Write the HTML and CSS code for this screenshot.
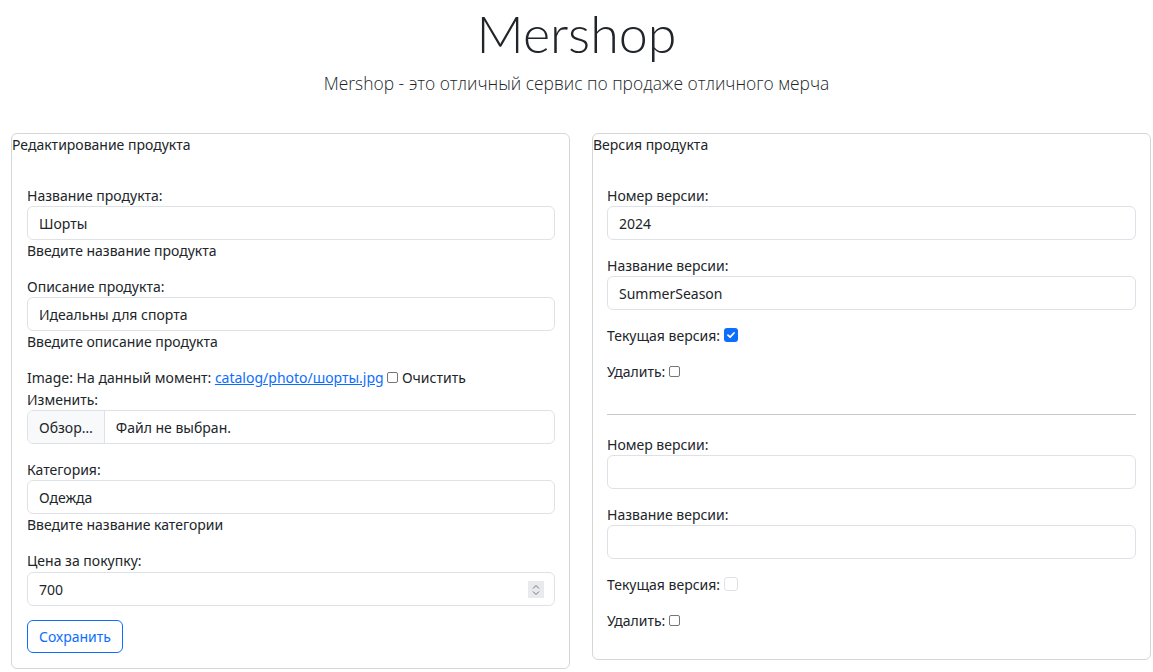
FILE: index.html
```html
<!DOCTYPE html>
<html lang="ru">
<head>
<meta charset="utf-8">
<title>Mershop</title>
<link rel="stylesheet" href="styles.css">
</head>
<body>
<header class="hero">
  <h1 class="hero-title">Mershop</h1>
  <p class="hero-lead">Mershop - это отличный сервис по продаже отличного мерча</p>
</header>
<main class="panels">
  <section class="card card-product">
    <div class="card-title">Редактирование продукта</div>
    <div class="card-body">
      <div class="group">
        <label class="label">Название продукта:</label>
        <div class="input">Шорты</div>
        <div class="help">Введите название продукта</div>
      </div>
      <div class="group">
        <label class="label">Описание продукта:</label>
        <div class="input">Идеальны для спорта</div>
        <div class="help">Введите описание продукта</div>
      </div>
      <div class="group">
        <div class="line">Image: На данный момент: <a class="link" href="#">catalog/photo/шорты.jpg</a> <span class="cb cb-native"></span> Очистить</div>
        <div class="line line-change">Изменить:</div>
        <div class="file">
          <span class="file-btn">Обзор…</span>
          <span class="file-name">Файл не выбран.</span>
        </div>
      </div>
      <div class="group">
        <label class="label">Категория:</label>
        <div class="input">Одежда</div>
        <div class="help">Введите название категории</div>
      </div>
      <div class="group group-price">
        <label class="label">Цена за покупку:</label>
        <div class="input input-number">700
          <span class="spin">
            <svg width="8" height="12" viewBox="0 0 8 12"><path d="M1 4.5 L4 1.5 L7 4.5" fill="none" stroke="#6c757d" stroke-width="1"/><path d="M1 7.5 L4 10.5 L7 7.5" fill="none" stroke="#6c757d" stroke-width="1"/></svg>
          </span>
        </div>
      </div>
      <button class="btn" type="button">Сохранить</button>
    </div>
  </section>

  <section class="card card-version">
    <div class="card-title">Версия продукта</div>
    <div class="card-body">
      <div class="group">
        <label class="label">Номер версии:</label>
        <div class="input">2024</div>
      </div>
      <div class="group">
        <label class="label">Название версии:</label>
        <div class="input">SummerSeason</div>
      </div>
      <div class="group check-row">Текущая версия: <span class="cb cb-checked"><svg width="10" height="10" viewBox="0 0 10 10"><path d="M2 5.2 L4.1 7.2 L8 3" fill="none" stroke="#fff" stroke-width="1.8" stroke-linecap="round" stroke-linejoin="round"/></svg></span></div>
      <div class="group check-row">Удалить: <span class="cb cb-native"></span></div>
      <hr class="divider">
      <div class="group">
        <label class="label">Номер версии:</label>
        <div class="input"></div>
      </div>
      <div class="group">
        <label class="label">Название версии:</label>
        <div class="input"></div>
      </div>
      <div class="group check-row">Текущая версия: <span class="cb cb-empty"></span></div>
      <div class="group check-row last">Удалить: <span class="cb cb-native"></span></div>
    </div>
  </section>
</main>
</body>
</html>
```

FILE: styles.css
```css
* { box-sizing: border-box; }

body {
  margin: 0;
  font-family: "Noto Sans", "Open Sans", sans-serif;
  font-size: 14px;
  line-height: 21px;
  color: #212529;
  background: #fff;
}

.hero {
  text-align: center;
  padding-top: 2px;
}

.hero-title {
  margin: 0;
  font-family: "Lato", "Open Sans", sans-serif;
  font-weight: 300;
  font-size: 52px;
  line-height: 62px;
  color: #212529;
}

.hero-lead {
  margin: 5px 0 0;
  font-family: "Open Sans", "Noto Sans", sans-serif;
  font-weight: 300;
  font-size: 17.4px;
  line-height: 28px;
}

.panels {
  display: flex;
  align-items: flex-start;
  gap: 22px;
  padding: 0 2px 0 11px;
  margin-top: 36px;
}

.card {
  flex: 1 1 0;
  border: 1px solid #d5d6d7;
  border-radius: 6px;
}

.card-title {
  padding: 0;
}

.card-body {
  padding: 30px 14px 15px 15px;
}

.card-version .card-body {
  padding: 30px 14px 14px 14px;
}

.group {
  margin-bottom: 15px;
}

.group.group-price {
  margin-bottom: 14px;
}

.group.last {
  margin-bottom: 14px;
}

.label, .line, .help {
  display: block;
}

.line-change {
  margin-top: 1px;
}

.input {
  position: relative;
  height: 34px;
  border: 1px solid #dee2e6;
  border-radius: 6px;
  padding: 0 11px;
  display: flex;
  align-items: center;
}

.input-number {
  margin-top: 1px;
}

.spin {
  position: absolute;
  right: 10px;
  top: 8px;
  width: 16px;
  height: 17px;
  background: #e9eaed;
  display: flex;
  align-items: center;
  justify-content: center;
}

.link {
  color: #0d6efd;
  text-decoration: underline;
}

.file {
  display: flex;
  height: 34px;
  border: 1px solid #dee2e6;
  border-radius: 6px;
  overflow: hidden;
}

.file-btn {
  display: flex;
  align-items: center;
  padding: 0 11px;
  background: #f8f9fa;
  border-right: 1px solid #dee2e6;
}

.file-name {
  display: flex;
  align-items: center;
  padding: 0 11px;
}

.btn {
  display: block;
  height: 33px;
  padding: 0 11px;
  font: inherit;
  color: #0d6efd;
  background: #fff;
  border: 1px solid #0d6efd;
  border-radius: 6px;
}

.cb {
  display: inline-block;
  vertical-align: middle;
  position: relative;
  top: -2px;
}

.cb-native {
  width: 11px;
  height: 11px;
  border: 1px solid #767676;
  border-radius: 2px;
  background: #fff;
}

.cb-checked {
  width: 14px;
  height: 14px;
  border-radius: 3px;
  background: #0d6efd;
  display: inline-flex;
  align-items: center;
  justify-content: center;
}

.cb-empty {
  width: 14px;
  height: 14px;
  border: 1px solid #dee2e6;
  border-radius: 3px;
}

.divider {
  border: 0;
  border-top: 1px solid #c9cacb;
  margin: 32px 0 19px;
}
```
